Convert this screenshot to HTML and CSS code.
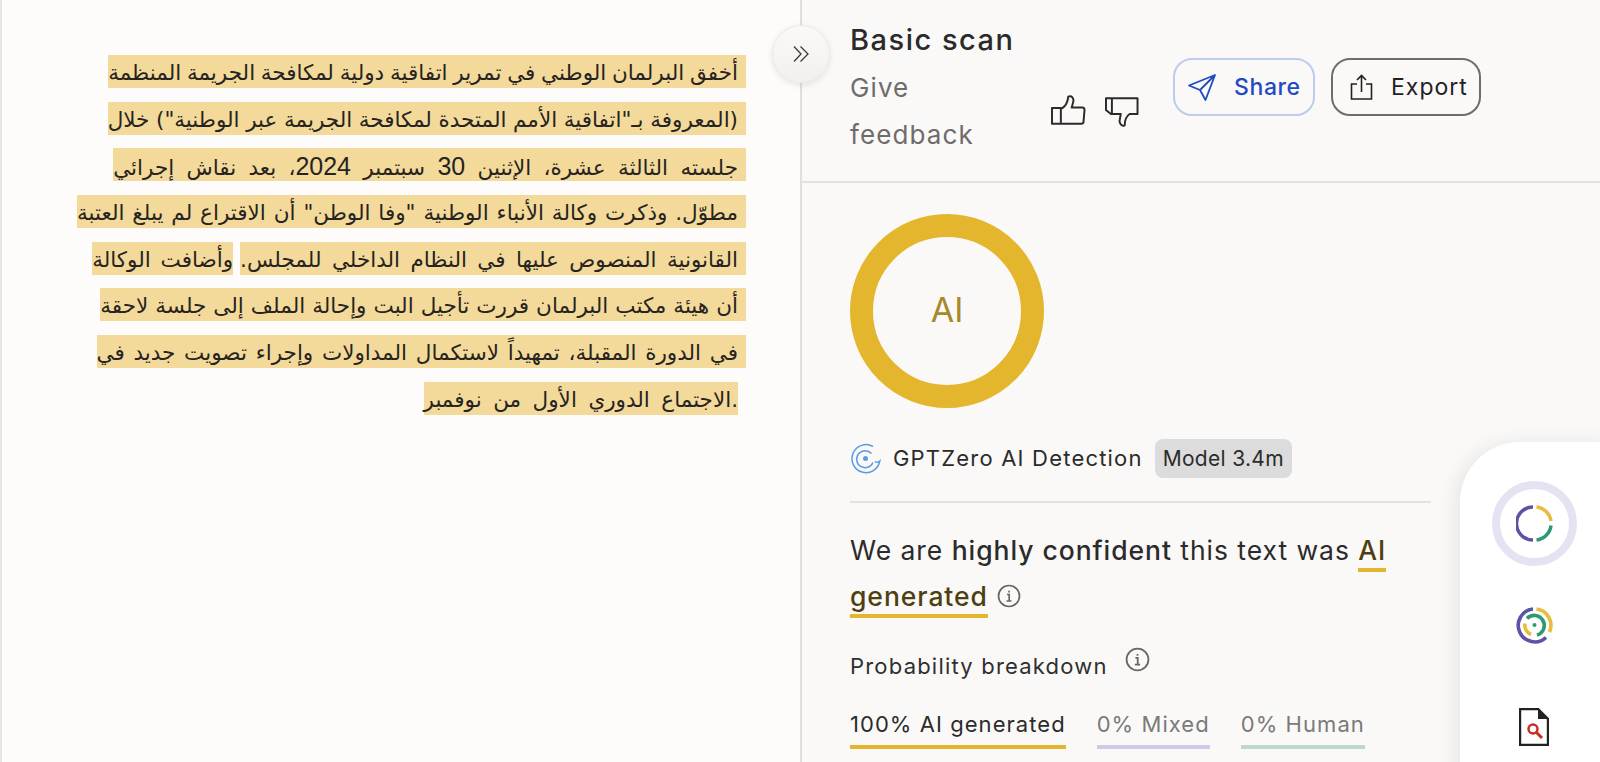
FILE: index.html
```html
<!DOCTYPE html>
<html lang="en">
<head>
<meta charset="utf-8">
<title>Basic scan</title>
<link rel="stylesheet" href="styles.css">
</head>
<body>
<div class="app">
  <main class="doc">
    <div class="line"><span class="hl l1">أخفق البرلمان الوطني في تمرير اتفاقية دولية لمكافحة الجريمة المنظمة</span></div>
    <div class="line"><span class="hl l2">(المعروفة بـ"اتفاقية الأمم المتحدة لمكافحة الجريمة عبر الوطنية") خلال</span></div>
    <div class="line"><span class="hl l3">جلسته الثالثة عشرة، الإثنين <span class="num">30</span> سبتمبر <span class="num">2024</span>، بعد نقاش إجرائي</span></div>
    <div class="line"><span class="hl l4">مطوّل. وذكرت وكالة الأنباء الوطنية "وفا الوطن" أن الاقتراع لم يبلغ العتبة</span></div>
    <div class="line"><span class="hl l5">القانونية المنصوص عليها في النظام الداخلي للمجلس.</span><span class="hl l5b">وأضافت الوكالة</span></div>
    <div class="line"><span class="hl l6">أن هيئة مكتب البرلمان قررت تأجيل البت وإحالة الملف إلى جلسة لاحقة</span></div>
    <div class="line"><span class="hl l7">في الدورة المقبلة، تمهيداً لاستكمال المداولات وإجراء تصويت جديد في</span></div>
    <div class="line"><span class="hl l8">الاجتماع الدوري الأول من نوفمبر.</span></div>
  </main>

  <section class="panel">
    <button class="collapse" aria-label="Collapse">
      <svg width="18" height="18" viewBox="0 0 18 18" fill="none" stroke="#3a3a3a" stroke-width="1.3"><path d="M2 1.5 9 9l-7 7.500M8.500 1.500 16 9l-7.500 7.500"/></svg>
    </button>
    <header class="head">
      <div class="titles">
        <h1 class="title">Basic scan</h1>
        <a class="give">Give feedback</a>
      </div>
      <div class="thumbs">
        <svg class="thumb" width="35" height="30" viewBox="0 0 35 30" fill="none" stroke="#2b2b2b" stroke-width="2" stroke-linejoin="round"><path d="M1 13h9v16H1zM10 14c4-2 7-6 7.500-12.500 3.500-1.500 6 1.500 5 5.500l-1.500 5.500h10.500c1.500 0 2.500 1 2.500 2.500l-1 12c0 1-1 2-2.500 2H10"/></svg>
        <svg class="thumb down" width="35" height="30" viewBox="0 0 35 30" fill="none" stroke="#2b2b2b" stroke-width="2" stroke-linejoin="round"><path d="M1 1h32v16H25c-3 2-5 5-5 11.500-3 1.500-6-2-5-6l1-5.500H6L1 13z"/><path d="M7 1v15"/></svg>
      </div>
      <div class="actions">
        <button class="btn share">
          <svg width="28" height="27" viewBox="0 0 28 27" fill="none" stroke="#1f4bbf" stroke-width="1.800" stroke-linejoin="round"><path d="M27 1 1 11.500l11 4.500 5.500 10zM27 1 12 16"/></svg>
          <span>Share</span>
        </button>
        <button class="btn export">
          <svg width="23" height="26" viewBox="0 0 23 26" fill="none" stroke="#222" stroke-width="1.600"><path d="M7 10H1.500v15h20V10H16M11.500 18V1.500M7 6l4.500-4.500L16 6"/></svg>
          <span>Export</span>
        </button>
      </div>
    </header>

    <div class="content">
      <div class="ring"><span>AI</span></div>

      <div class="model">
        <svg width="31" height="31" viewBox="0 0 31 31" fill="none" stroke="#5b9be6" stroke-width="1.500"><path d="M23 3.500A14 14 0 1 0 29.800 18c-1.800 1.500-3.500 1.500-5 .5"/><path d="M21.500 10.500a8.500 8.500 0 1 0 1.500 9"/><circle cx="15.500" cy="15.500" r="2.500" fill="#5b9be6" stroke="none"/></svg>
        <span class="model-name">GPTZero AI Detection</span>
        <span class="badge">Model 3.4m</span>
      </div>

      <p class="verdict">We are <b>highly confident</b> this text was <em class="mark">AI</em> <em class="mark">generated</em><svg class="info" width="24" height="24" viewBox="0 0 24 24" fill="none" stroke="#666" stroke-width="1.700"><circle cx="12" cy="12" r="10.500"/><path d="M10 10.500h2.200v6.500M9.500 17h5M12 6.800v1.600"/></svg></p>

      <div class="prob">
        <span>Probability breakdown</span>
        <svg class="info-sm" width="25" height="25" viewBox="0 0 24 24" fill="none" stroke="#666" stroke-width="1.700"><circle cx="12" cy="12" r="10.500"/><path d="M10 10.500h2.200v6.500M9.500 17h5M12 6.800v1.600"/></svg>
      </div>

      <div class="tabs">
        <span class="tab ai">100% AI generated</span>
        <span class="tab mixed">0% Mixed</span>
        <span class="tab human">0% Human</span>
      </div>
    </div>
  </section>

  <aside class="dock">
    <div class="dock-active">
      <svg width="37" height="37" viewBox="0 0 37 37" fill="none" stroke-width="3.500"><path d="M17 2A16.500 16.500 0 0 0 17 35" stroke="#5d53a3"/><path d="M20.500 2A16.500 16.500 0 0 1 35 16" stroke="#e6bd3c"/><path d="M35 20.500A16.500 16.500 0 0 1 20.500 35" stroke="#2f9a72"/></svg>
    </div>
    <svg class="dock-icon" width="37" height="37" viewBox="0 0 37 37" fill="none" stroke-width="3.600"><path d="M17 2A16.500 16.500 0 1 0 30 30.500" stroke="#5d53a3"/><path d="M20.500 2A16.500 16.500 0 0 1 33.500 25" stroke="#e6bd3c"/><path d="M11 11.500A10 10 0 1 1 21 28" stroke="#2f9a72"/><path d="M9 16.500A10 10 0 0 0 15 27.500" stroke="#e6bd3c"/><circle cx="18.500" cy="18" r="2" fill="#2f9a72" stroke="none"/></svg>
    <svg class="dock-doc" width="30" height="38" viewBox="0 0 30 38" fill="none"><path d="M1 1h18l10 10v26H1z" fill="#fff" stroke="#222" stroke-width="2.400"/><path d="M19 1l10 10H19z" fill="#222"/><circle cx="14" cy="21" r="4.500" stroke="#c62f22" stroke-width="2.500"/><path d="M17.500 24.500 23 30" stroke="#c62f22" stroke-width="3"/></svg>
  </aside>
</div>
</body>
</html>
```

FILE: styles.css
```css
* { box-sizing: border-box; }
html, body { margin: 0; height: 100%; overflow: hidden; }
body { background: #faf9f8; font-family: Inter, "Liberation Sans", sans-serif; color: #222; }

.app { display: flex; width: 1600px; height: 762px; overflow: hidden; position: relative; }

.doc {
  width: 802px; flex: none; background: #fdfcfb;
  border-left: 2px solid #e6e5e4; border-right: 2px solid #e0dfde;
  padding: 55px 54px 0 0; direction: rtl;
  font-family: "DejaVu Sans", sans-serif; font-size: 21.5px; color: #262320;
}
.line { height: 46.67px; display: flex; align-items: flex-start; justify-content: flex-start; gap: 7px; white-space: nowrap; }
.hl { display: block; height: 33px; line-height: 36px; background: #f3da9b; padding-right: 8px; }
.l1 { word-spacing: -1.1px; }
.l2 { word-spacing: -.2px; }
.l3 { word-spacing: 5.5px; }
.l4 { word-spacing: 1.1px; }
.l5 { word-spacing: 3.6px; }
.l5b { padding-right: 0; word-spacing: 3px; }
.l6 { word-spacing: .2px; }
.l7 { word-spacing: 1.9px; }
.l8 { direction: ltr; padding-right: 0; margin-right: 8px; word-spacing: 4.7px; }
.num { font-family: "Liberation Sans", sans-serif; font-size: 25px; word-spacing: 0; }

.panel { flex: 1; position: relative; min-width: 0; }
.collapse {
  position: absolute; left: -30px; top: 25px; width: 58px; height: 58px; border-radius: 50%;
  border: 1px solid #eceae8; background: linear-gradient(#faf9f8, #f1f0ef);
  box-shadow: 0 2px 6px rgba(0,0,0,.1); display: flex; align-items: center; justify-content: center; padding: 0;
}

.head { height: 183px; border-bottom: 2px solid #e3e2e1; padding: 16px 0 0 48px; display: flex; align-items: flex-start; }
.titles { width: 201px; flex: none; }
.title { margin: 0; font-size: 29px; line-height: 47px; font-weight: 500; letter-spacing: 1.5px; color: #2a2a2a; white-space: nowrap; }
.give { display: block; width: 140px; font-size: 26px; line-height: 47px; letter-spacing: 1.1px; color: #6e6c6a; padding-top: 1px; }
.thumbs { display: flex; gap: 19px; margin-top: 79px; width: 88px; flex: none; }
.thumb.down { margin-top: 2px; }
.actions { display: flex; gap: 16px; margin: 42px 0 0 34px; }
.btn { height: 58px; border-radius: 19px; background: transparent; display: flex; align-items: center; font-family: inherit; font-size: 23px; letter-spacing: .6px; padding: 0; }
.share { width: 142px; border: 2px solid #bccbee; color: #1f4bbf; font-weight: 500; padding-left: 13px; gap: 18px; }
.export { width: 150px; border: 2px solid #6d6d6d; color: #222; font-weight: 400; padding-left: 17px; gap: 18px; letter-spacing: 1px; }

.content { padding: 31px 0 0 48px; width: 629px; }
.ring { width: 194px; height: 194px; border-radius: 50%; border: 23px solid #e3b62e; display: flex; align-items: center; justify-content: center; font-size: 34px; color: #a68a2a; padding-bottom: 4px; }
.model { display: flex; align-items: center; margin-top: 31px; padding-bottom: 24px; border-bottom: 2px solid #e3e2e1; height: 64px; }
.model-name { font-size: 22px; letter-spacing: 1.2px; margin-left: 12px; color: #2b2b2b; }
.badge { margin-left: 12px; height: 39px; line-height: 39px; padding: 0 8px; border-radius: 8px; background: #dcdcdc; font-size: 21px; letter-spacing: .3px; font-weight: 400; color: #2b2b2b; }

.verdict { margin: 24px 0 0; font-size: 26.500px; line-height: 46px; letter-spacing: .95px; color: #2b2b2b; width: 560px; }
.verdict b { font-weight: 500; }
.mark { font-style: normal; font-weight: 500; color: #4e3f10; border-bottom: 4px solid #e3b62e; padding-bottom: 2px; }
.info { margin-left: 9px; vertical-align: -2px; }

.prob { display: flex; align-items: flex-start; margin-top: 27px; font-size: 22px; letter-spacing: 1.2px; color: #2f2f2f; height: 38px; }
.prob span { line-height: 38px; margin-top: 1px; }
.info-sm { margin-left: 17px; margin-top: 1px; }
.tabs { display: flex; gap: 31px; margin-top: 21px; font-size: 22px; letter-spacing: 1.05px; }
.tab { line-height: 38px; height: 44px; border-bottom: 4px solid; white-space: nowrap; }
.ai { color: #2b2b2b; border-color: #e3b62e; }
.mixed { color: #7a7a7a; border-color: #d0cbe5; }
.human { color: #7a7a7a; border-color: #bcd9cd; }

.dock {
  position: absolute; left: 1460px; top: 442px; width: 160px; height: 340px;
  background: #fff; border-radius: 60px 0 0 0;
  box-shadow: -6px 0 18px rgba(0,0,0,.07);
  display: flex; flex-direction: column; align-items: flex-start; padding: 39px 0 0 31.500px;
}
.dock-active { width: 85px; height: 85px; border-radius: 50%; border: 8px solid #e4e3f1; display: flex; align-items: center; justify-content: center; }
.dock-icon { margin: 41px 0 0 24px; }
.dock-doc { margin: 64px 0 0 27px; }
```
